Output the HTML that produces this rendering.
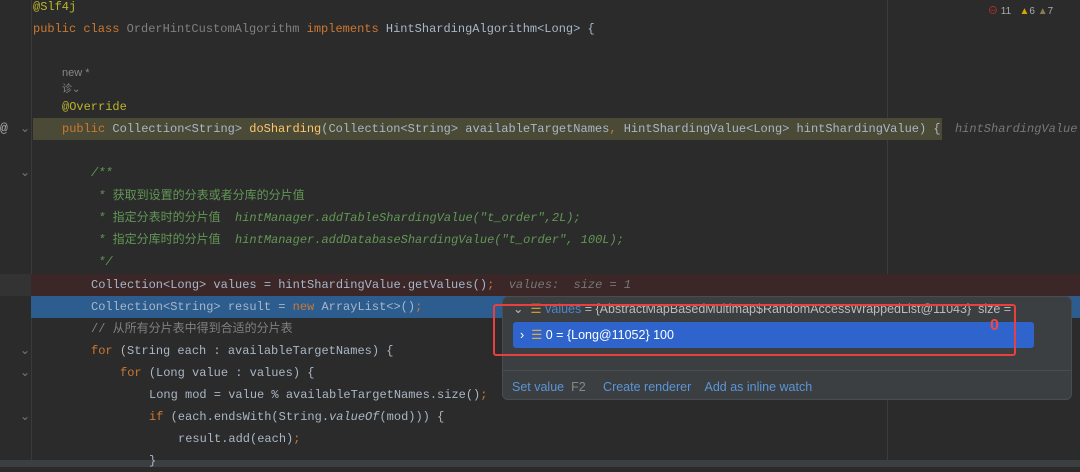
<!DOCTYPE html>
<html><head><meta charset="utf-8"><style>
*{margin:0;padding:0;box-sizing:border-box}
body{width:1080px;height:467px;overflow:hidden;background:#2b2b2b;position:relative;font-family:"Liberation Mono","Noto Sans CJK SC",monospace;font-size:12px;color:#a9b7c6}
.l{position:absolute;left:0;height:22px;line-height:22px;white-space:pre}
.k{color:#cc7832}.a{color:#bbb529}.g{color:#808080}.c{color:#629755}.ci{color:#629755;font-style:italic}.f{color:#ffc66d}.i{font-style:italic}.h{color:#787878;font-style:italic}
.ui{font-family:"Liberation Sans","Noto Sans CJK SC",sans-serif}
</style></head><body>
<div style="position:absolute;left:31px;top:0;width:1px;height:467px;background:#3a3a3a"></div>
<div style="position:absolute;left:887px;top:0;width:1px;height:467px;background:#3c3c3c"></div>
<div style="position:absolute;left:33px;top:118px;width:909px;height:22px;background:#4a4a37"></div>
<div style="position:absolute;left:31px;top:274px;width:1049px;height:22px;background:#3b2628"></div>
<div style="position:absolute;left:0;top:274px;width:31px;height:22px;background:#333"></div>
<div style="position:absolute;left:31px;top:296px;width:1049px;height:22px;background:#2d5c8f"></div>
<div style="position:absolute;left:0;top:460px;width:1080px;height:7px;background:#3c3f41"></div>

<div class="l" style="top:-4px;left:33px"><span class="a">@Slf4j</span></div>
<div class="l" style="top:18px;left:33px"><span class="k">public class </span><span class="g">OrderHintCustomAlgorithm</span> <span class="k">implements</span> HintShardingAlgorithm&lt;Long&gt; {</div>
<div class="l ui" style="top:62px;left:62px;font-size:11px;color:#888">new *</div>
<div class="l ui" style="top:79px;left:62px;font-size:10px;color:#888">诊⌄</div>
<div class="l" style="top:96px;left:62px"><span class="a">@Override</span></div>
<div class="l" style="top:118px;left:0;color:#aaa;font-size:13px">@ </div>
<div class="l" style="top:118px;left:20px;color:#777">⌄</div>
<div class="l" style="top:118px;left:62px"><span class="k">public </span>Collection&lt;String&gt; <span class="f">doSharding</span>(Collection&lt;String&gt; availableTargetNames<span class="k">,</span> HintShardingValue&lt;Long&gt; hintShardingValue) {  <span class="h">hintShardingValue</span></div>
<div class="l" style="top:162px;left:91px"><span class="ci">/**</span></div>
<div class="l" style="top:162px;left:20px;color:#777">⌄</div>
<div class="l" style="top:185px;left:91px"><span class="ci"> * </span><span class="c">获取到设置的分表或者分库的分片值</span></div>
<div class="l" style="top:207px;left:91px"><span class="ci"> * </span><span class="c">指定分表时的分片值</span><span class="ci">  hintManager.addTableShardingValue("t_order",2L);</span></div>
<div class="l" style="top:229px;left:91px"><span class="ci"> * </span><span class="c">指定分库时的分片值</span><span class="ci">  hintManager.addDatabaseShardingValue("t_order", 100L);</span></div>
<div class="l" style="top:251px;left:91px"><span class="ci"> */</span></div>
<div class="l" style="top:274px;left:91px">Collection&lt;Long&gt; values = hintShardingValue.getValues()<span class="k">;</span>  <span class="h">values:  size = 1</span></div>
<div class="l" style="top:296px;left:91px">Collection&lt;String&gt; result = <span class="k">new </span>ArrayList&lt;&gt;()<span class="k">;</span></div>
<div class="l" style="top:318px;left:91px"><span class="g">// </span><span class="g">从所有分片表中得到合适的分片表</span></div>
<div class="l" style="top:340px;left:91px"><span class="k">for </span>(String each : availableTargetNames) {</div>
<div class="l" style="top:362px;left:120px"><span class="k">for </span>(Long value : values) {</div>
<div class="l" style="top:384px;left:149px">Long mod = value % availableTargetNames.size()<span class="k">;</span></div>
<div class="l" style="top:406px;left:149px"><span class="k">if </span>(each.endsWith(String.<span class="i">valueOf</span>(mod))) {</div>
<div class="l" style="top:428px;left:178px">result.add(each)<span class="k">;</span></div>
<div class="l" style="top:450px;left:149px">}</div>
<div class="l" style="top:340px;left:20px;color:#777">⌄</div>
<div class="l" style="top:362px;left:20px;color:#777">⌄</div>
<div class="l" style="top:406px;left:20px;color:#777">⌄</div>

<div class="ui" style="position:absolute;top:2px;left:988px;font-size:10px;color:#aaa;white-space:pre"><span style="color:#c33">⊖</span> 11   <span style="color:#d9a400">▲</span>6 <span style="color:#8a7a50">▲</span>7</div>

<div class="ui" style="position:absolute;left:502px;top:296px;width:570px;height:104px;background:#3c3f41;border:1px solid #4a4d50;border-radius:6px;font-size:12.5px">
 <div style="position:absolute;left:10px;top:4px;color:#bbb;white-space:pre">⌄  <span style="color:#c89a3a">☰</span> <span style="color:#4a86c8">values</span> = {AbstractMapBasedMultimap$RandomAccessWrappedList@11043}  size =</div>
 <div style="position:absolute;left:10px;top:25px;width:521px;height:26px;background:#2e64cc;border-radius:3px;color:#fff;line-height:26px;white-space:pre">  ›  <span style="color:#d9a94a">☰</span> 0 = {Long@11052} 100</div>
 <div style="position:absolute;left:0;top:73px;width:568px;height:1px;background:#4a4d50"></div>
 <div style="position:absolute;left:9px;top:83px;color:#5a95d6;white-space:pre">Set value  <span style="color:#888">F2</span>     Create renderer    Add as inline watch</div>
</div>
<div style="position:absolute;left:493px;top:304px;width:523px;height:52px;border:2px solid #e8403f;border-radius:3px"></div>
<div class="ui" style="position:absolute;left:990px;top:317px;color:#f04848;font-size:16px;font-weight:bold">0</div>
</body></html>
